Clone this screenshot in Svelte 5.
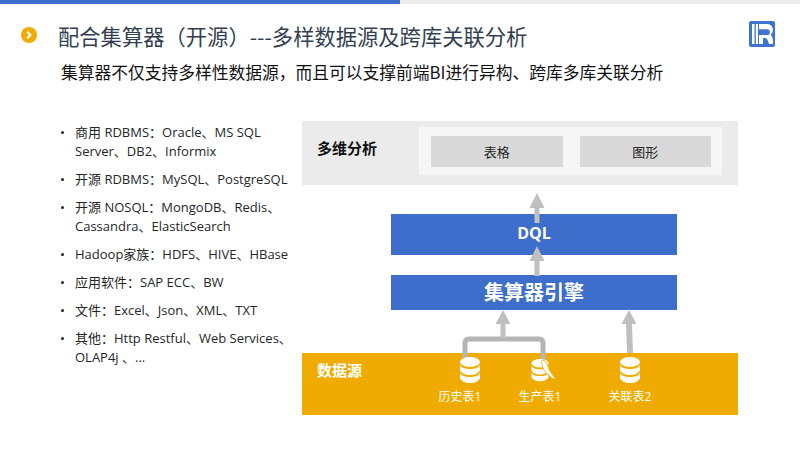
<script lang="ts">
  const sources = [
    ['商用 RDBMS：Oracle、MS SQL Server、DB2、Informix'],
    ['开源 RDBMS：MySQL、PostgreSQL'],
    ['开源 NOSQL：MongoDB、Redis、Cassandra、ElasticSearch'],
    ['Hadoop家族：HDFS、HIVE、HBase'],
    ['应用软件：SAP ECC、BW'],
    ['文件：Excel、Json、XML、TXT'],
    ['其他：Http Restful、Web Services、OLAP4j 、...'],
  ];
  // the first label sits 10px left of its cylinder in the reference
  const tables = [
    { name: '历史表1', x: 138, shift: -10, dolphin: false },
    { name: '生产表1', x: 208, shift: 0, dolphin: true },
    { name: '关联表2', x: 298, shift: 0, dolphin: false },
  ];
</script>

<div class="page">
  <div class="topbar"><div class="progress"></div></div>

  <header class="head">
    <span class="dot">
      <svg width="16" height="16" viewBox="0 0 16 16">
        <circle cx="8" cy="8" r="8" fill="#f0ab00" />
        <path d="M6.2 4.8 9.4 8 6.2 11.2" fill="none" stroke="#fff" stroke-width="2.2" />
      </svg>
    </span>
    <h1>配合集算器（开源）---多样数据源及跨库关联分析</h1>
    <svg class="logo" width="26" height="26" viewBox="0 0 26 26">
      <rect width="26" height="26" rx="2" fill="#3f73d0" />
      <rect x="3" y="3" width="2.5" height="20" fill="#fff" />
      <rect x="6.800" y="3" width="2.200" height="20" fill="#fff" />
      <path d="M10 3H18a6 6 0 0 1 3.500 10.800C23 15 23.500 17 24 19V23H20C19 19 18 17 15 17H14V23H10V14H18a2.800 2.800 0 0 0 0-5.700H10z" fill="#fff" />
    </svg>
  </header>

  <p class="sub">集算器不仅支持多样性数据源，而且可以支撑前端BI进行异构、跨库多库关联分析</p>

  <main class="body">
    <ul class="list">
      {#each sources as [line]}
        <li>{line}</li>
      {/each}
    </ul>

    <section class="diagram">
      <div class="analysis">
        <strong>多维分析</strong>
        <div class="views">
          <span>表格</span>
          <span>图形</span>
        </div>
      </div>

      <div class="bar dql">DQL</div>
      <div class="bar engine">集算器引擎</div>

      <div class="source">
        <strong>数据源</strong>

        <svg class="arrows links" width="436" height="62" viewBox="0 0 436 62">
          <path d="M163 5V-9" fill="none" stroke="#b5b5b5" stroke-width="5" />
          <path d="M241 9V-9" fill="none" stroke="#b5b5b5" stroke-width="5" />
        </svg>

        {#each tables as t}
          <div class="table" style="left: {t.x}px">
            <svg width="36" height="30" viewBox="0 0 36 30">
              <g fill="#fff" transform={t.dolphin ? 'translate(18 15) scale(.85) translate(-18 -15)' : undefined}>
                <ellipse cx="18" cy="6" rx="10" ry="5" />
                <path d="M8 9c2 3 5 4 10 4s8-1 10-4v5c-1 3-5 5-10 5s-9-2-10-5z" />
                <path d="M8 17c2 3 5 4 10 4s8-1 10-4v5c-1 3-5 5-10 5s-9-2-10-5z" />
              </g>
              {#if t.dolphin}
                <path d="M20 4c3 0 5 3 6 7 1 3 4 8 8 12-4 0-6-2-8-5-2-1-4-3-5-6-1-3-2-6-1-8z" fill="#fff" stroke="#f0ab00" stroke-width=".8" />
              {/if}
            </svg>
            <span style="margin-left: {t.shift * 2}px">{t.name}</span>
          </div>
        {/each}
      </div>

      <svg class="arrows" width="436" height="232" viewBox="0 0 436 232">
        <path d="M163 232V222Q163 218 167 218H237Q241 218 241 222V232" fill="none" stroke="#b5b5b5" stroke-width="5" />
        <g fill="#bfbfbf">
          <path d="M232.500 102V87H227.500L235 72 242.500 87H237.500V102z" />
          <path d="M232.500 155V140H227.500L235 125 242.500 140H237.500V155z" />
          <path d="M198.500 217V203H193.500L201 189 208.500 203H203.500V217z" />
          <path d="M325 232 324 203H319.500L327 189 334.500 203H330L331 232z" />
        </g>
      </svg>
    </section>
  </main>
</div>

<style>
  :global(body) {
    margin: 0;
    background: #fff;
  }

  .page {
    width: 800px;
    height: 450px;
    overflow: hidden;
    font-family: "Open Sans", "Noto Sans CJK SC", sans-serif;
    color: #262626;
  }

  .topbar {
    height: 4px;
    background: #ececec;
  }

  .progress {
    width: 400px;
    height: 4px;
    background: #3d6ecb;
  }

  .head {
    display: flex;
    align-items: center;
    height: 30px;
    margin-top: 16px;
    padding: 0 25px 0 21px;
  }

  .dot {
    display: flex;
    margin-right: 21px;
  }

  h1 {
    flex: 1;
    margin: 0;
    font-size: 21.300px;
    font-weight: 400;
    color: #333f50;
    font-family: "Noto Sans CJK SC", sans-serif;
  }

  .logo {
    margin-top: -2px;
  }

  .sub {
    margin: 10px 0 0 61px;
    font-size: 16.750px;
    line-height: 24px;
    color: #111;
    font-family: "Noto Sans CJK SC", sans-serif;
  }

  .body {
    display: flex;
    margin-top: 37px;
  }

  .list {
    width: 227px;
    margin: 0;
    padding: 2px 0 0 75px;
    box-sizing: content-box;
    font-size: 13px;
    line-height: 19px;
    list-style: none;
  }

  .list li {
    position: relative;
    margin-bottom: 9px;
  }

  .list li::before {
    content: "";
    position: absolute;
    left: -14px;
    top: 8px;
    width: 3px;
    height: 3px;
    border-radius: 50%;
    background: #262626;
  }

  .diagram {
    position: relative;
    display: flex;
    flex-direction: column;
    width: 436px;
  }

  .analysis {
    display: flex;
    align-items: flex-start;
    height: 64px;
    background: #ebebeb;
  }

  .analysis strong {
    width: 117px;
    padding: 17px 0 0 15px;
    box-sizing: border-box;
    font-size: 15px;
    line-height: 20px;
    color: #111;
  }

  .views {
    display: flex;
    gap: 17px;
    width: 303px;
    height: 48px;
    margin-top: 6px;
    padding: 9px 11px 8px 12px;
    box-sizing: border-box;
    background: #f6f6f6;
  }

  .views span {
    flex: 1;
    display: flex;
    align-items: center;
    justify-content: center;
    padding-bottom: 1px;
    background: #d9d9d9;
    font-size: 13px;
  }

  .bar {
    display: flex;
    align-items: center;
    justify-content: center;
    width: 286px;
    margin-left: 89px;
    box-sizing: border-box;
    background: #3d6ecb;
    color: #fff;
    font-weight: 700;
  }

  .dql {
    height: 41px;
    margin-top: 29px;
    padding-bottom: 3px;
    font-size: 16px;
  }

  .engine {
    height: 35px;
    margin-top: 20px;
    padding-bottom: 2px;
    font-size: 20px;
  }

  .source {
    position: relative;
    height: 62px;
    margin-top: 43px;
    background: #f0ab00;
    color: #fff;
  }

  .source strong {
    position: absolute;
    left: 15px;
    top: 7px;
    font-size: 15px;
    line-height: 20px;
  }

  .table {
    position: absolute;
    top: 3px;
    display: flex;
    flex-direction: column;
    align-items: center;
    width: 60px;
    font-size: 12px;
    line-height: 14px;
  }

  .table span {
    margin-top: 4px;
    white-space: nowrap;
  }

  .arrows {
    position: absolute;
    left: 0;
    top: 0;
    pointer-events: none;
  }
</style>
